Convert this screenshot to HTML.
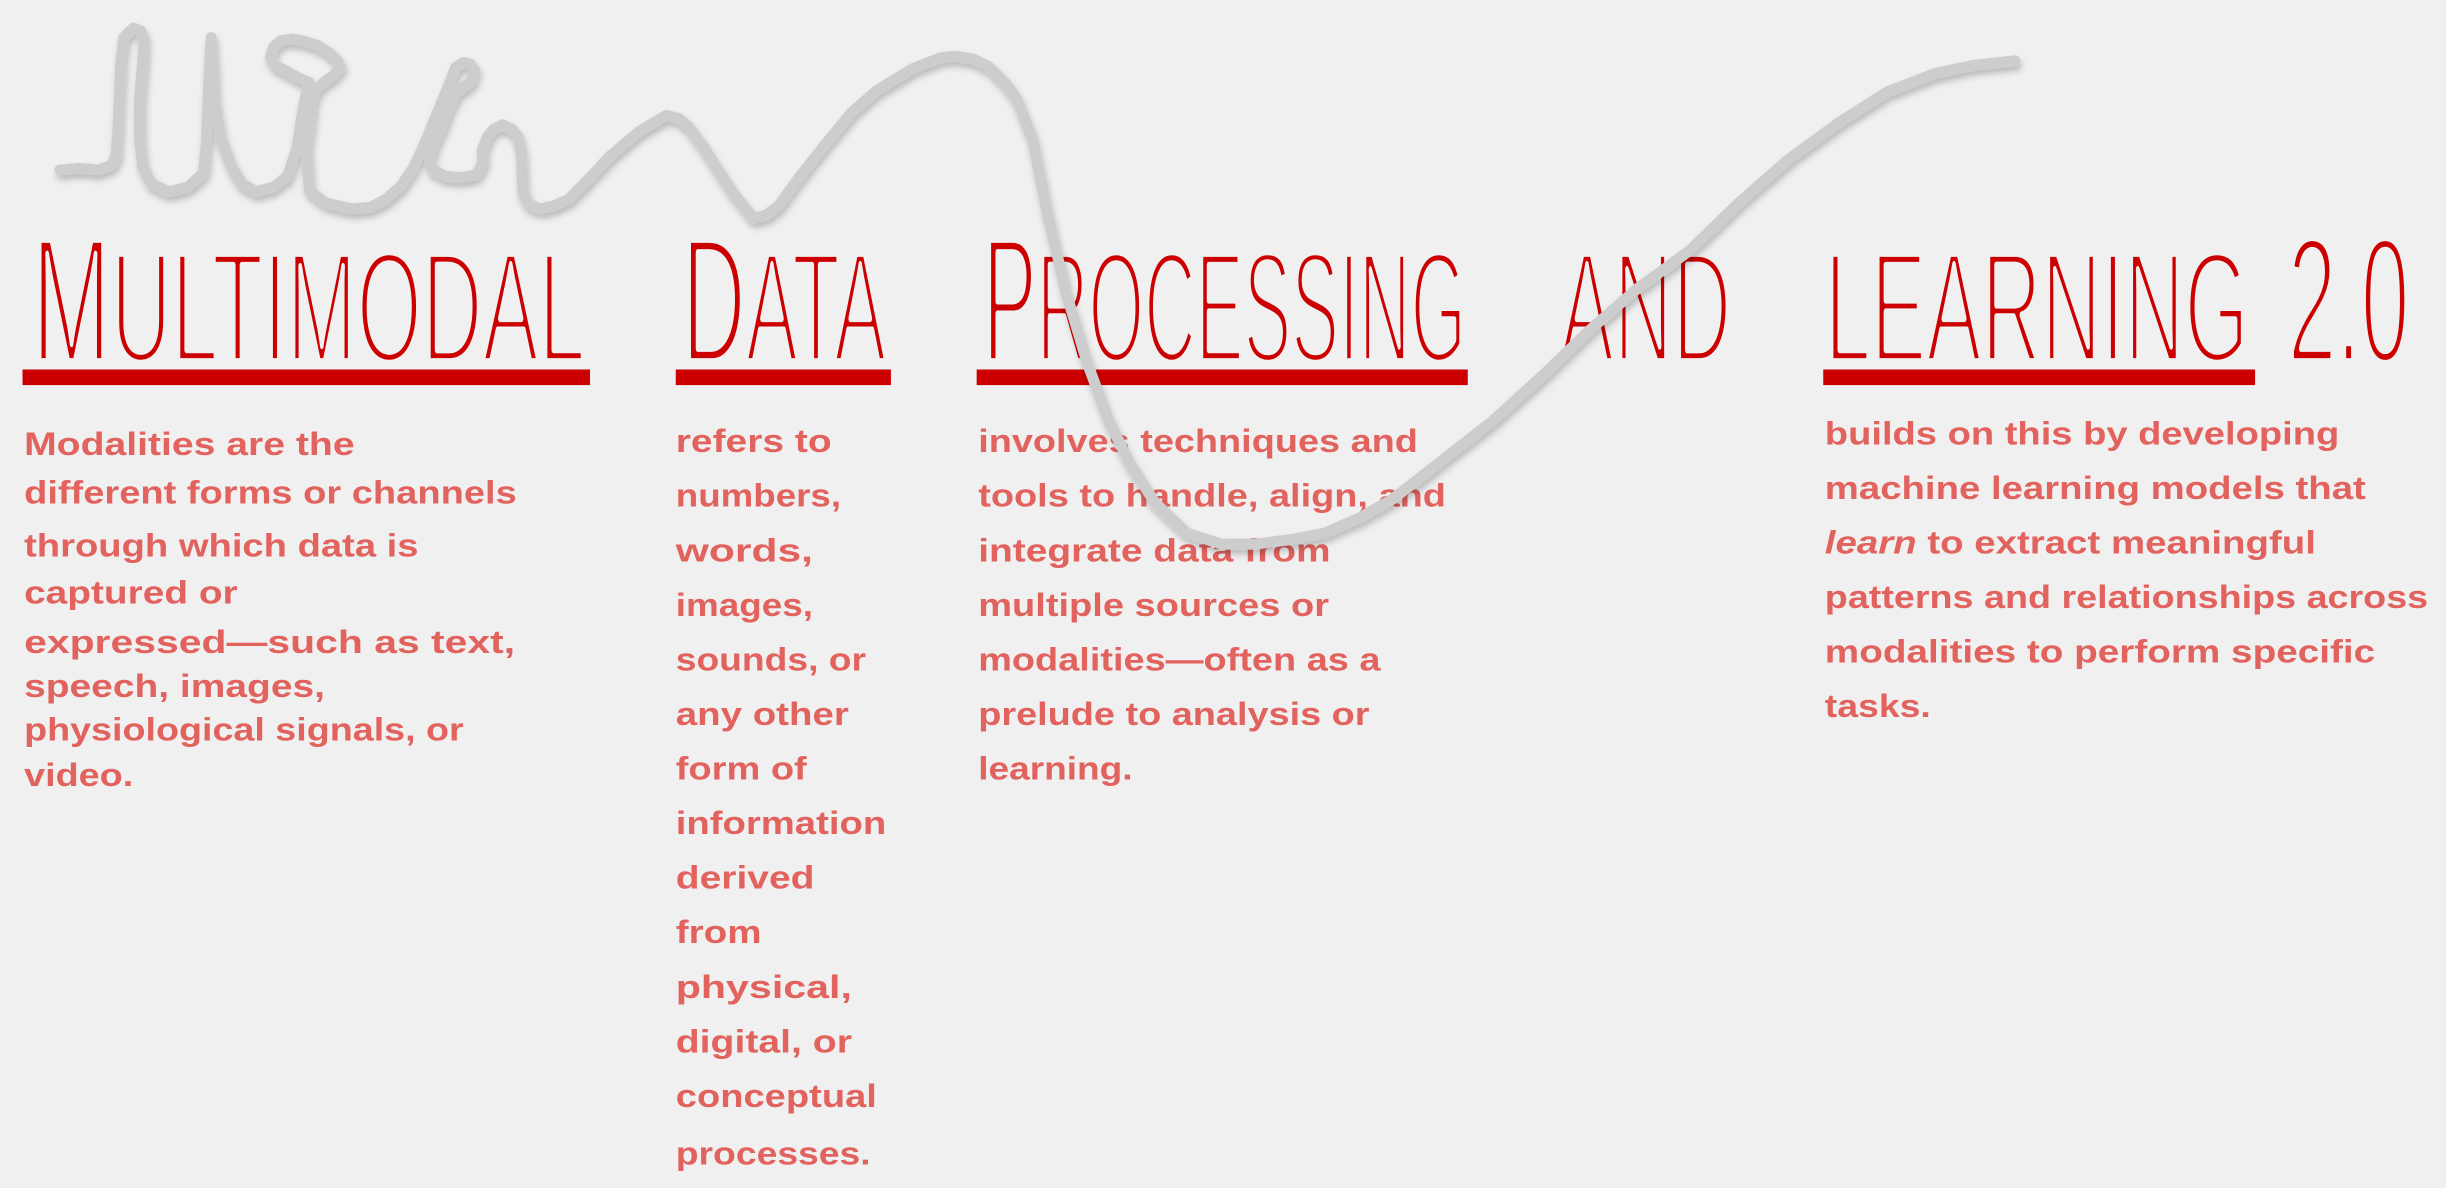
<!DOCTYPE html>
<html><head><meta charset="utf-8"><style>
html,body{margin:0;padding:0;background:#f0f0f0;overflow:hidden}
svg{display:block}
.t{font-family:"Liberation Sans Narrow","Liberation Sans",sans-serif;fill:#cc0000;font-weight:normal;stroke:#f0f0f0;stroke-width:4.5;stroke-linejoin:round}
.b{font-family:"Liberation Sans",sans-serif;font-weight:bold;fill:#e2625e;font-size:21px}
</style></head><body>
<svg width="2446" height="1188" viewBox="0 0 1568 762" xmlns="http://www.w3.org/2000/svg">
<defs>
<filter id="sh" x="-10%" y="-10%" width="120%" height="130%">
<feDropShadow dx="1" dy="3" stdDeviation="2" flood-color="#000" flood-opacity="0.22"/>
</filter>
</defs>
<rect width="1568" height="762" fill="#f0f0f0"/>
<g class="t">
<text x="20" y="232" font-size="114" textLength="355" lengthAdjust="spacingAndGlyphs">M<tspan font-size="101">ULTIMODAL</tspan></text>
<text x="437" y="232" font-size="114" textLength="131" lengthAdjust="spacingAndGlyphs">D<tspan font-size="101">ATA</tspan></text>
<text x="630" y="232" font-size="114" textLength="310" lengthAdjust="spacingAndGlyphs">P<tspan font-size="101">ROCESSING</tspan></text>
<text x="1000" y="232" font-size="101" textLength="110" lengthAdjust="spacingAndGlyphs">AND</text>
<text x="1170" y="232" font-size="101" textLength="272" lengthAdjust="spacingAndGlyphs">LEARNING</text>
<text x="1467" y="232" font-size="114" textLength="78" lengthAdjust="spacingAndGlyphs">2.0</text>
</g>
<g fill="#cc0000">
<rect x="14" y="237" width="364" height="10"/>
<rect x="433" y="237" width="138" height="10"/>
<rect x="626" y="237" width="315" height="10"/>
<rect x="1169" y="237" width="277" height="10"/>
</g>
<g class="b">
<text x="15" y="292" textLength="212" lengthAdjust="spacingAndGlyphs">Modalities are the</text>
<text x="15" y="323" textLength="316" lengthAdjust="spacingAndGlyphs">different forms or channels</text>
<text x="15" y="357" textLength="253" lengthAdjust="spacingAndGlyphs">through which data is</text>
<text x="15" y="387" textLength="137" lengthAdjust="spacingAndGlyphs">captured or</text>
<text x="15" y="419" textLength="315" lengthAdjust="spacingAndGlyphs">expressed—such as text,</text>
<text x="15" y="447" textLength="193" lengthAdjust="spacingAndGlyphs">speech, images,</text>
<text x="15" y="475" textLength="282" lengthAdjust="spacingAndGlyphs">physiological signals, or</text>
<text x="15" y="504" textLength="70" lengthAdjust="spacingAndGlyphs">video.</text>
</g>
<g class="b">
<text x="433" y="290" textLength="100" lengthAdjust="spacingAndGlyphs">refers to</text>
<text x="433" y="325" textLength="106" lengthAdjust="spacingAndGlyphs">numbers,</text>
<text x="433" y="360" textLength="88" lengthAdjust="spacingAndGlyphs">words,</text>
<text x="433" y="395" textLength="88" lengthAdjust="spacingAndGlyphs">images,</text>
<text x="433" y="430" textLength="122" lengthAdjust="spacingAndGlyphs">sounds, or</text>
<text x="433" y="465" textLength="111" lengthAdjust="spacingAndGlyphs">any other</text>
<text x="433" y="500" textLength="84" lengthAdjust="spacingAndGlyphs">form of</text>
<text x="433" y="535" textLength="135" lengthAdjust="spacingAndGlyphs">information</text>
<text x="433" y="570" textLength="89" lengthAdjust="spacingAndGlyphs">derived</text>
<text x="433" y="605" textLength="55" lengthAdjust="spacingAndGlyphs">from</text>
<text x="433" y="640" textLength="113" lengthAdjust="spacingAndGlyphs">physical,</text>
<text x="433" y="675" textLength="113" lengthAdjust="spacingAndGlyphs">digital, or</text>
<text x="433" y="710" textLength="129" lengthAdjust="spacingAndGlyphs">conceptual</text>
<text x="433" y="747" textLength="125" lengthAdjust="spacingAndGlyphs">processes.</text>
</g>
<g class="b">
<text x="627" y="290" textLength="282" lengthAdjust="spacingAndGlyphs">involves techniques and</text>
<text x="627" y="325" textLength="300" lengthAdjust="spacingAndGlyphs">tools to handle, align, and</text>
<text x="627" y="360" textLength="226" lengthAdjust="spacingAndGlyphs">integrate data from</text>
<text x="627" y="395" textLength="225" lengthAdjust="spacingAndGlyphs">multiple sources or</text>
<text x="627" y="430" textLength="258" lengthAdjust="spacingAndGlyphs">modalities—often as a</text>
<text x="627" y="465" textLength="251" lengthAdjust="spacingAndGlyphs">prelude to analysis or</text>
<text x="627" y="500" textLength="99" lengthAdjust="spacingAndGlyphs">learning.</text>
</g>
<g class="b">
<text x="1170" y="285" textLength="330" lengthAdjust="spacingAndGlyphs">builds on this by developing</text>
<text x="1170" y="320" textLength="347" lengthAdjust="spacingAndGlyphs">machine learning models that</text>
<text x="1170" y="355" textLength="315" lengthAdjust="spacingAndGlyphs"><tspan font-style="italic">learn</tspan> to extract meaningful</text>
<text x="1170" y="390" textLength="387" lengthAdjust="spacingAndGlyphs">patterns and relationships across</text>
<text x="1170" y="425" textLength="353" lengthAdjust="spacingAndGlyphs">modalities to perform specific</text>
<text x="1170" y="460" textLength="68" lengthAdjust="spacingAndGlyphs">tasks.</text>
</g>
<polyline filter="url(#sh)" fill="none" stroke="#cdcdcd" stroke-width="7" stroke-linejoin="round" stroke-linecap="round"
points="38,109 50,108 63,109 71,106 74,100 75,85 76,64 77,40 79,24 85,18 90,20 92,26 91,40 89,64 89,88 91,107 97,118 108,123 120,120 130,111 132,90 133,64 134,40 135,24 136,40 137,64 141,88 148,107 155,118 164,123 175,120 184,113 190,95 193,75 196,60 198,53 191,50 184,46 176,42 173,37 175,30 180,26 187,25 193,26 203,29 211,34 216,39 218,43 214,48 207,53 202,58 200,64 198,80 196,96 197,110 198,122 208,130 225,134 237,133 247,128 257,119 265,107 272,92 279,75 286,58 292,43 297,40 301,41 304,45 302,52 292,60 287,70 283,81 278,92 275,102 277,109 285,113 295,114 305,112 309,105 309,96 312,88 316,83 322,80 328,83 332,88 334,100 335,124 339,131 346,134 355,132 364,128 376,116 391,100 410,84 427,74 435,76 441,81 450,93 459,107 470,124 483,140 491,138 499,132 512,114 531,90 546,72 562,58 585,44 603,37 612,36 624,38 634,43 645,54 652,64 662,90 672,140 684,190 697,233 710,268 723,295 740,322 761,342 783,349 805,349 828,346 849,342 872,332 893,320 925,295 957,270 990,240 1020,211 1050,185 1083,161 1115,130 1147,102 1180,78 1210,59 1241,47 1265,42 1292,39"/>
</svg>
</body></html>
